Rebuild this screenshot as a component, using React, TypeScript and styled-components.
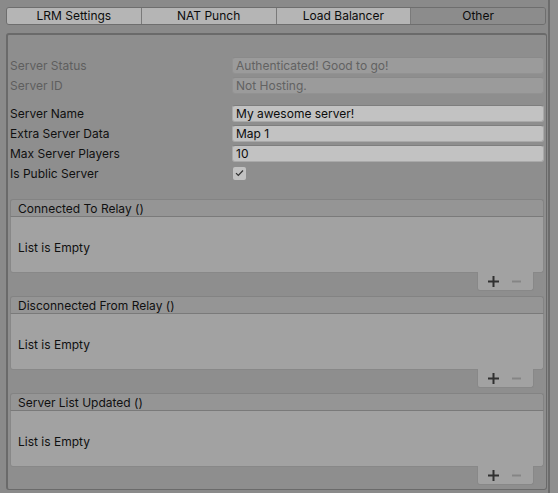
import { FunctionComponent } from "react";
import styled, { createGlobalStyle } from "styled-components";

const GlobalStyle = createGlobalStyle`
  html, body {
    margin: 0;
    padding: 0;
    background: #8a8a8a;
  }
  body {
    font-family: Inter, "Noto Sans", "Liberation Sans", sans-serif;
    font-size: 12px;
    color: #101010;
  }
`

const Window = styled.div`
  width: 558px;
  height: 493px;
  display: flex;
  background: #8a8a8a;
  overflow: hidden;
`

const Content = styled.div`
  width: 548px;
  padding: 7px 0 0 6px;
  box-sizing: border-box;
  display: flex;
  flex-direction: column;
`

const ScrollGutter = styled.div`
  width: 10px;
  border-left: 2px solid #6c6c6c;
  background: #8e8e8e;
  box-sizing: border-box;
`

const Tabs = styled.div`
  display: flex;
  width: 540px;
  height: 18px;
  border: 1px solid #6e6e6e;
  border-radius: 3px;
  overflow: hidden;
  box-sizing: border-box;
`

const Tab = styled.div<{ $active?: boolean }>`
  flex: 1;
  display: flex;
  align-items: center;
  justify-content: center;
  padding-bottom: 1px;
  background: ${({ $active }) => ($active ? "#8c8c8c" : "#b5b5b5")};
  border-left: 1px solid #7a7a7a;
  &:first-child { border-left: none; }
  font-size: 12px;
  color: #0c0c0c;
`

const Panel = styled.div`
  margin-top: 8px;
  width: 541px;
  height: 457px;
  border: 1px solid #6a6a6a;
  border-top-width: 2px;
  border-left-width: 2px;
  border-radius: 3px;
  background: #8e8e8e;
  box-sizing: border-box;
  padding: 20px 2px 0 2px;
  display: flex;
  flex-direction: column;
  overflow: hidden;
`

const Row = styled.div`
  display: flex;
  align-items: center;
  height: 20px;
  flex-shrink: 0;
`

const Label = styled.div<{ $disabled?: boolean }>`
  width: 222px;
  color: ${({ $disabled }) => ($disabled ? "#5e5e5e" : "#101010")};
`

const Field = styled.div<{ $disabled?: boolean }>`
  width: 312px;
  height: 17px;
  box-sizing: border-box;
  padding: 0 3px;
  display: flex;
  align-items: center;
  border-radius: 3px;
  border: 1px solid ${({ $disabled }) => ($disabled ? "#929292" : "#a9a9a9")};
  border-top-color: ${({ $disabled }) => ($disabled ? "#8a8a8a" : "#7e7e7e")};
  background: ${({ $disabled }) => ($disabled ? "#9b9b9b" : "#c2c2c2")};
  color: ${({ $disabled }) => ($disabled ? "#626262" : "#0c0c0c")};
`

const Check = styled.div`
  width: 13px;
  height: 13px;
  margin-left: 1px;
  border-radius: 2px;
  background: #c2c2c2;
  display: flex;
  align-items: center;
  justify-content: center;
`

const Spacer = styled.div<{ $h: number }>`
  height: ${({ $h }) => $h}px;
  flex-shrink: 0;
`

const EventBlock = styled.div`
  display: flex;
  flex-direction: column;
  flex-shrink: 0;
  margin-bottom: 5px;
  &:last-child { margin-bottom: 0; }
`

const EventHeader = styled.div`
  height: 18px;
  box-sizing: border-box;
  padding-left: 7px;
  display: flex;
  align-items: center;
  background: #959595;
  border: 1px solid #838383;
  border-bottom-color: #7a7a7a;
  border-radius: 3px 3px 0 0;
  color: #101010;
`

const EventBody = styled.div`
  height: 56px;
  box-sizing: border-box;
  padding: 5px 0 0 7px;
  display: flex;
  align-items: center;
  background: #a2a2a2;
  border: 1px solid #888888;
  border-top: none;
  border-radius: 0 0 3px 3px;
`

const FooterRow = styled.div`
  display: flex;
  justify-content: flex-end;
  padding-right: 10px;
`

const Footer = styled.div`
  width: 57px;
  height: 19px;
  margin-top: -1px;
  box-sizing: border-box;
  display: flex;
  align-items: center;
  justify-content: space-between;
  padding: 0 12px 0 10px;
  background: #a2a2a2;
  border: 1px solid #888888;
  border-top: none;
  border-radius: 0 0 3px 3px;
`

const PlusIcon = () => (
  <svg width="11" height="11" viewBox="0 0 11 11">
    <rect x="4.5" y="0" width="2" height="11" fill="#303030" />
    <rect x="0" y="4.5" width="11" height="2" fill="#303030" />
  </svg>
)

const MinusIcon = () => (
  <svg width="9" height="3" viewBox="0 0 9 3">
    <rect x="0" y="0.5" width="9" height="2" fill="#858585" />
  </svg>
)

const CheckIcon = () => (
  <svg width="9" height="8" viewBox="0 0 9 8">
    <path d="M1 4.2 L3.3 6.5 L8 1.5" fill="none" stroke="#303030" strokeWidth="1.2" />
  </svg>
)

const EventList: FunctionComponent<{ title: string }> = ({ title }) => (
  <EventBlock>
    <EventHeader>{title}</EventHeader>
    <EventBody>List is Empty</EventBody>
    <FooterRow>
      <Footer>
        <PlusIcon />
        <MinusIcon />
      </Footer>
    </FooterRow>
  </EventBlock>
)

const tabs = ["LRM Settings", "NAT Punch", "Load Balancer", "Other"]

export default function App() {
  return (
    <Window>
      <GlobalStyle />
      <Content>
        <Tabs>
          {tabs.map((t) => (
            <Tab key={t} $active={t === "Other"}>{t}</Tab>
          ))}
        </Tabs>
        <Panel>
          <Row>
            <Label $disabled>Server Status</Label>
            <Field $disabled>Authenticated! Good to go!</Field>
          </Row>
          <Row>
            <Label $disabled>Server ID</Label>
            <Field $disabled>Not Hosting.</Field>
          </Row>
          <Spacer $h={8} />
          <Row>
            <Label>Server Name</Label>
            <Field>My awesome server!</Field>
          </Row>
          <Row>
            <Label>Extra Server Data</Label>
            <Field>Map 1</Field>
          </Row>
          <Row>
            <Label>Max Server Players</Label>
            <Field>10</Field>
          </Row>
          <Row>
            <Label>Is Public Server</Label>
            <Check><CheckIcon /></Check>
          </Row>
          <Spacer $h={16} />
          <EventList title="Connected To Relay ()" />
          <EventList title="Disconnected From Relay ()" />
          <EventList title="Server List Updated ()" />
        </Panel>
      </Content>
      <ScrollGutter />
    </Window>
  )
}
